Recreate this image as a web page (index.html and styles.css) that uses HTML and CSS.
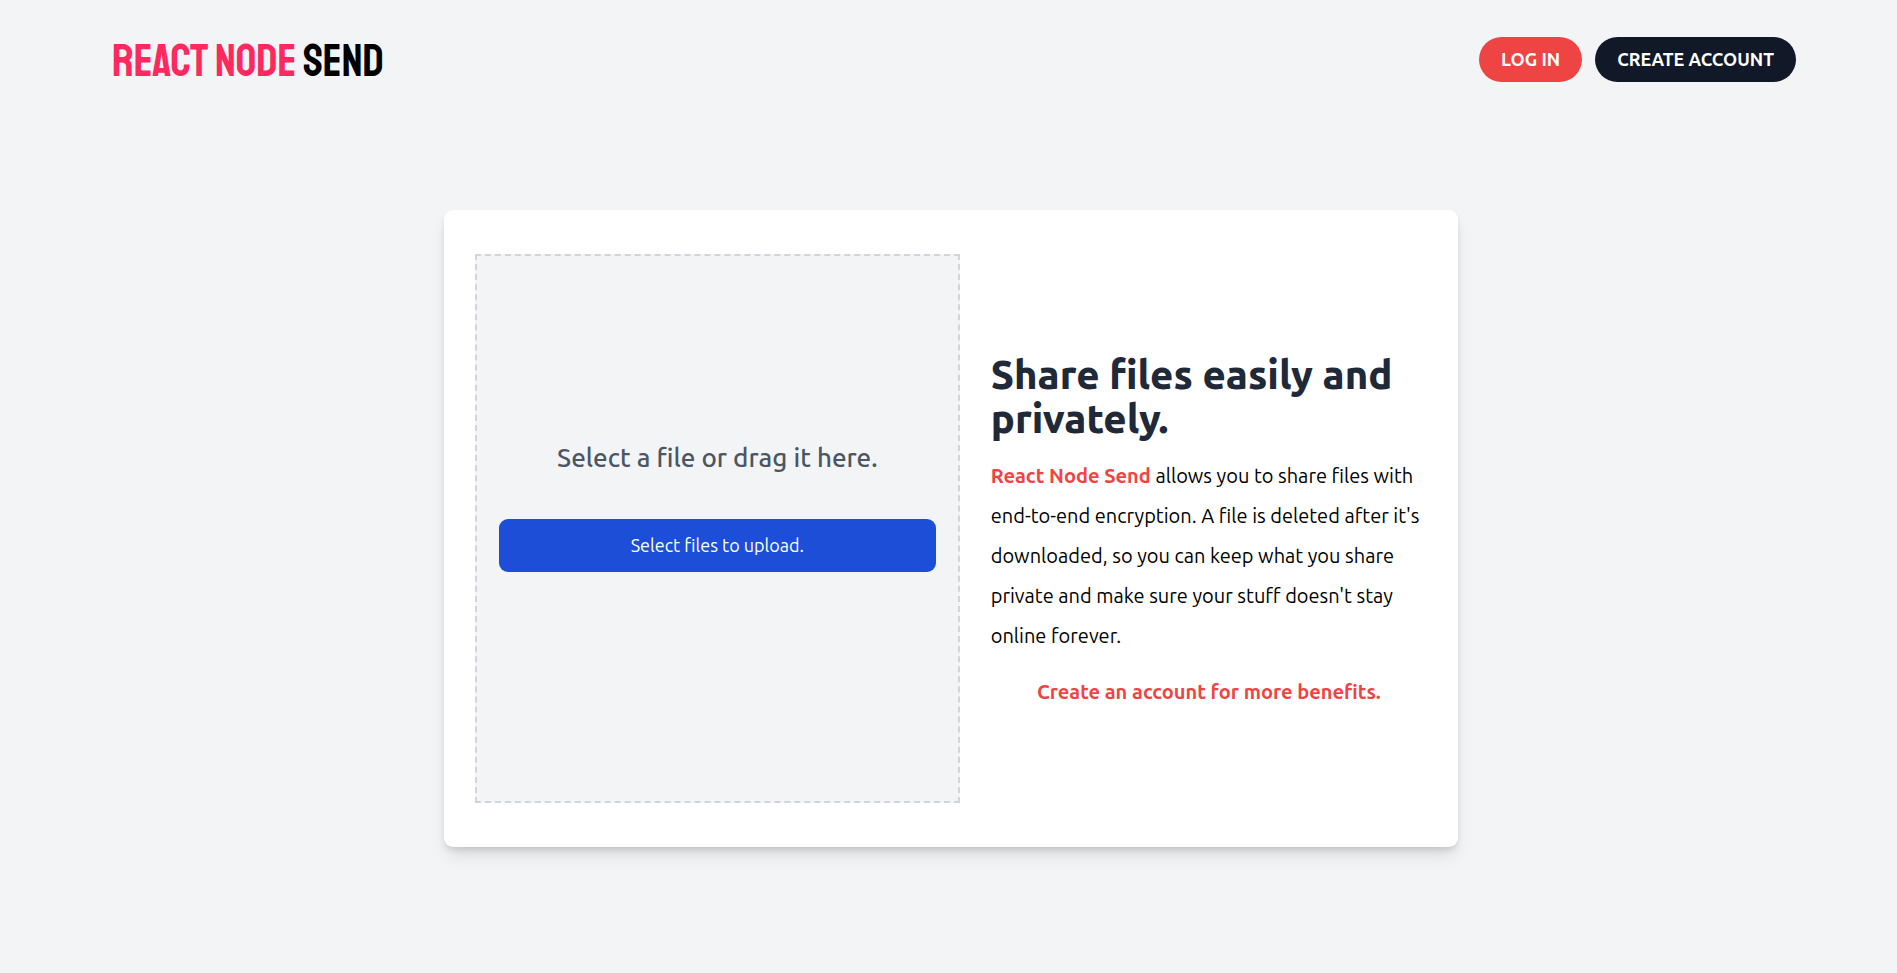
FILE: index.html
```html
<!DOCTYPE html>
<html lang="en">
<head>
<meta charset="utf-8">
<meta name="viewport" content="width=device-width, initial-scale=1">
<title>React Node Send</title>
<link rel="stylesheet" href="styles.css">
</head>
<body>
<div class="container">
  <header class="header">
    <a class="logo" href="#"><span class="logo-accent">REACT NODE</span> SEND</a>
    <nav class="nav">
      <a class="pill pill-red" href="#">LOG IN</a>
      <a class="pill pill-dark" href="#">CREATE ACCOUNT</a>
    </nav>
  </header>
  <main class="card">
    <section class="dropzone">
      <p class="drop-text">Select a file or drag it here.</p>
      <button class="upload" type="button">Select files to upload.</button>
    </section>
    <section class="intro">
      <h1 class="title">Share files easily and privately.</h1>
      <p class="copy"><span class="brand">React Node Send</span> allows you to share files with end-to-end encryption. A file is deleted after it's downloaded, so you can keep what you share private and make sure your stuff doesn't stay online forever.</p>
      <a class="signup" href="#">Create an account for more benefits.</a>
    </section>
  </main>
</div>
</body>
</html>
```
FILE: styles.css
```css
* { box-sizing: border-box; }
body {
  margin: 0;
  padding-left: 5px;
  min-height: 100vh;
  background: #f3f4f6;
  color: #000;
  font-family: Ubuntu, "Noto Sans", sans-serif;
  font-weight: 400;
}
h1, p { margin: 0; }
a { text-decoration: none; color: inherit; }
.container { max-width: 1690px; margin: 0 auto; }
.header {
  display: flex;
  flex-wrap: wrap;
  align-items: center;
  justify-content: space-between;
  padding: 32px 0 0 6px;
}
.logo {
  padding-top: 6px;
  font-family: Staatliches, "Bebas Neue", "Roboto Condensed", "Liberation Sans", sans-serif;
  font-size: 45px;
  line-height: 48px;
  font-weight: 400;
}
.logo-accent { color: #ff285f; }
.nav { display: flex; gap: 13px; }
.pill {
  padding: 10px 22px;
  border-radius: 23px;
  color: #fff;
  font-size: 18px;
  line-height: 25px;
  font-weight: 700;
}
.pill-red { background: #ef4444; }
.pill-dark { background: #111827; }
.card {
  display: grid;
  grid-template-columns: 10fr 9fr;
  gap: 31px;
  width: 60%;
  min-width: 800px;
  margin: 124px auto 0;
  padding: 44px 31px;
  border-radius: 9px;
  background: #fff;
  box-shadow: 0 11px 17px -3px rgba(0, 0, 0, .1), 0 4px 7px -2px rgba(0, 0, 0, .15);
}
.dropzone {
  display: flex;
  flex-direction: column;
  justify-content: center;
  gap: 44px;
  min-height: 549px;
  padding: 0 22px 45px;
  border: 2px dashed #d1d5db;
  background: #f3f4f6;
}
.drop-text {
  color: #4b5563;
  font-size: 26px;
  line-height: 35px;
  font-weight: 500;
  text-align: center;
}
.upload {
  padding: 13px;
  border: 0;
  border-radius: 9px;
  background: #1d4ed8;
  color: #fff;
  font: inherit;
  font-size: 18px;
  line-height: 27px;
}
.intro {
  display: flex;
  flex-direction: column;
  justify-content: center;
  padding-top: 3px;
}
.title {
  margin-bottom: 15px;
  color: #1f2937;
  font-size: 40px;
  line-height: 44px;
  font-weight: 800;
}
.copy { font-size: 20px; line-height: 40px; }
.brand { color: #ef4444; font-weight: 700; }
.signup {
  margin-top: 20px;
  color: #ef4444;
  font-size: 20px;
  line-height: 31px;
  font-weight: 700;
  text-align: center;
}
```
